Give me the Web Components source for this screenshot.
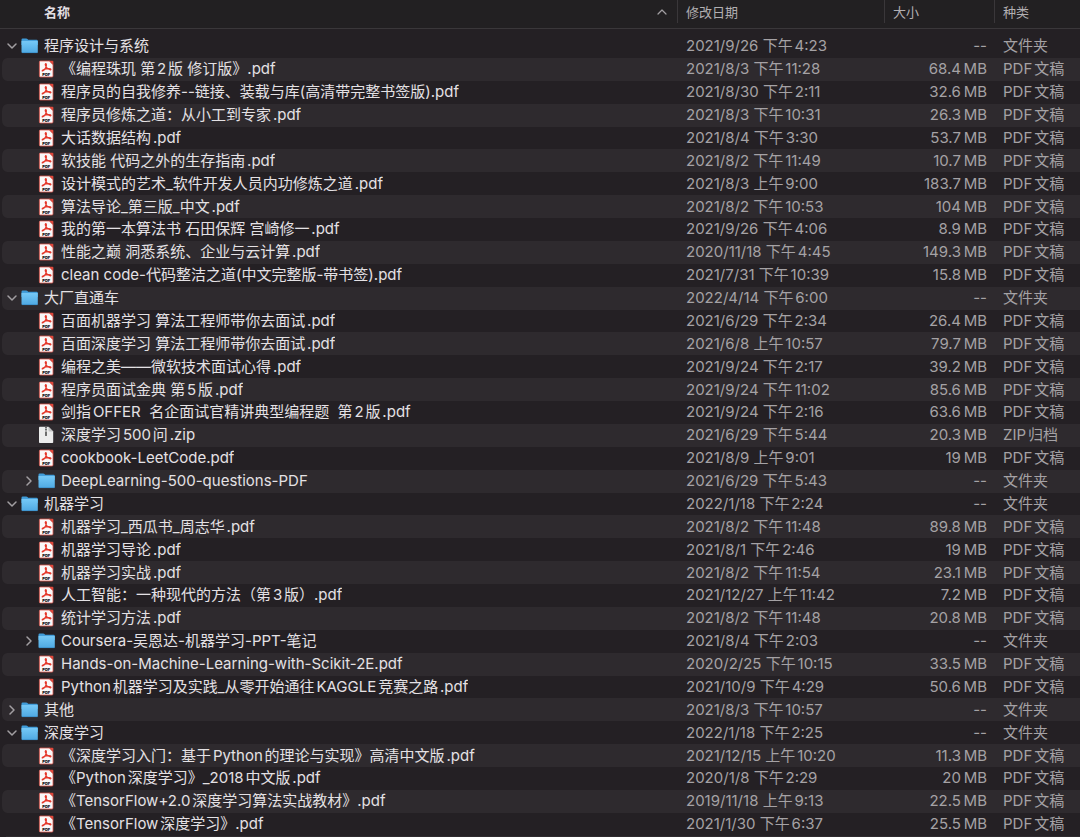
<!DOCTYPE html>
<html lang="zh-CN">
<head>
<meta charset="utf-8">
<meta name="viewport" content="width=device-width, initial-scale=1">
<title>程序设计与系统</title>
<style>
  html, body { margin: 0; background: #242024; }
  body {
    color-scheme: dark;
    font-family: Inter, "Noto Sans CJK SC", sans-serif;
    text-autospace: normal;
    text-spacing-trim: space-all;
    overflow: hidden;
  }
</style>
</head>
<body>
<file-browser></file-browser>

<script>
const ICONS = {
  folder: `
    <svg viewBox="0 0 18 18" aria-hidden="true">
      <defs>
        <linearGradient id="f" x1="0" y1="0" x2="0" y2="1">
          <stop offset="0" stop-color="#74c8f6"/><stop offset="1" stop-color="#4fa9e2"/>
        </linearGradient>
      </defs>
      <path d="M.5 2.7Q.5 1.5 1.7 1.5H5.3Q6 1.5 6.5 2L7.1 2.7H15.6Q16.8 2.7 16.8 3.9V8H.5Z" fill="#3f9bd8"/>
      <path d="M.5 4.4H16.8V15Q16.8 16 15.8 16H1.5Q.5 16 .5 15Z" fill="url(#f)"/>
      <path d="M.5 4.4H16.8" stroke="#8fd6fb" stroke-width=".6"/>
      <path d="M1 15.6H16.4" stroke="#3b8ec8" stroke-width=".8"/>
    </svg>`,
  pdf: `
    <svg viewBox="0 0 18 18" aria-hidden="true">
      <path d="M2.4 1H11.4L15 4.6V16Q15 17 14 17H2.4Q1.4 17 1.4 16V2Q1.4 1 2.4 1Z" fill="#faf8f8" stroke="#d9564c" stroke-width=".8"/>
      <path d="M11 .7H14.4Q15.4 .7 15.4 1.7V5Z" fill="#e0483b"/>
      <path d="M4.9 10.7C7.1 9.4 8.6 6.9 8.3 4.3C8.1 3 6.9 3.8 7.4 5.1C8.1 7.4 9.7 9.1 12 9.7C13.3 10 13.2 8.6 11.6 8.6C9.1 8.5 6.8 9 4.9 10C3.8 10.6 4.2 11.2 4.9 10.7Z" fill="none" stroke="#e5382b" stroke-width="1.3"/>
      <text x="8.2" y="15.6" text-anchor="middle" font-family="Inter, sans-serif" font-size="4" font-weight="900" fill="#242124">PDF</text>
    </svg>`,
  zip: `
    <svg viewBox="0 0 18 18" aria-hidden="true">
      <path d="M2 .8H10.5L15.2 5.5V16.2Q15.2 17 14.4 17H1.8Q1 17 1 16.2V1.6Q1 .8 1.8 .8Z" fill="#ececec"/>
      <path d="M10.5 .8V4.6Q10.5 5.5 11.4 5.5H15.2Z" fill="#c3c3c3"/>
      <path d="M8 1V7" stroke="#6d6d6d" stroke-width="2" stroke-dasharray="1.2 .5"/>
      <rect x="7" y="6.4" width="2" height="3.6" rx=".6" fill="#6d6d6d"/>
    </svg>`
};

// [depth, kind, name, modified, size, open]
const FILES = [
  [0, 'folder', '程序设计与系统', '2021/9/26 下午4:23', '--', true],
  [1, 'pdf', '《编程珠玑 第2版 修订版》.pdf', '2021/8/3 下午11:28', '68.4 MB'],
  [1, 'pdf', '程序员的自我修养--链接、装载与库(高清带完整书签版).pdf', '2021/8/30 下午2:11', '32.6 MB'],
  [1, 'pdf', '程序员修炼之道：从小工到专家.pdf', '2021/8/3 下午10:31', '26.3 MB'],
  [1, 'pdf', '大话数据结构.pdf', '2021/8/4 下午3:30', '53.7 MB'],
  [1, 'pdf', '软技能 代码之外的生存指南.pdf', '2021/8/2 下午11:49', '10.7 MB'],
  [1, 'pdf', '设计模式的艺术_软件开发人员内功修炼之道.pdf', '2021/8/3 上午9:00', '183.7 MB'],
  [1, 'pdf', '算法导论_第三版_中文.pdf', '2021/8/2 下午10:53', '104 MB'],
  [1, 'pdf', '我的第一本算法书 石田保辉 宫崎修一.pdf', '2021/9/26 下午4:06', '8.9 MB'],
  [1, 'pdf', '性能之巅 洞悉系统、企业与云计算.pdf', '2020/11/18 下午4:45', '149.3 MB'],
  [1, 'pdf', 'clean code-代码整洁之道(中文完整版-带书签).pdf', '2021/7/31 下午10:39', '15.8 MB'],
  [0, 'folder', '大厂直通车', '2022/4/14 下午6:00', '--', true],
  [1, 'pdf', '百面机器学习 算法工程师带你去面试.pdf', '2021/6/29 下午2:34', '26.4 MB'],
  [1, 'pdf', '百面深度学习 算法工程师带你去面试.pdf', '2021/6/8 上午10:57', '79.7 MB'],
  [1, 'pdf', '编程之美——微软技术面试心得.pdf', '2021/9/24 下午2:17', '39.2 MB'],
  [1, 'pdf', '程序员面试金典 第5版.pdf', '2021/9/24 下午11:02', '85.6 MB'],
  [1, 'pdf', '剑指OFFER  名企面试官精讲典型编程题  第2版.pdf', '2021/9/24 下午2:16', '63.6 MB'],
  [1, 'zip', '深度学习500问.zip', '2021/6/29 下午5:44', '20.3 MB'],
  [1, 'pdf', 'cookbook-LeetCode.pdf', '2021/8/9 上午9:01', '19 MB'],
  [1, 'folder', 'DeepLearning-500-questions-PDF', '2021/6/29 下午5:43', '--', false],
  [0, 'folder', '机器学习', '2022/1/18 下午2:24', '--', true],
  [1, 'pdf', '机器学习_西瓜书_周志华.pdf', '2021/8/2 下午11:48', '89.8 MB'],
  [1, 'pdf', '机器学习导论.pdf', '2021/8/1 下午2:46', '19 MB'],
  [1, 'pdf', '机器学习实战.pdf', '2021/8/2 下午11:54', '23.1 MB'],
  [1, 'pdf', '人工智能：一种现代的方法（第3版）.pdf', '2021/12/27 上午11:42', '7.2 MB'],
  [1, 'pdf', '统计学习方法.pdf', '2021/8/2 下午11:48', '20.8 MB'],
  [1, 'folder', 'Coursera-吴恩达-机器学习-PPT-笔记', '2021/8/4 下午2:03', '--', false],
  [1, 'pdf', 'Hands-on-Machine-Learning-with-Scikit-2E.pdf', '2020/2/25 下午10:15', '33.5 MB'],
  [1, 'pdf', 'Python机器学习及实践_从零开始通往KAGGLE竞赛之路.pdf', '2021/10/9 下午4:29', '50.6 MB'],
  [0, 'folder', '其他', '2021/8/3 下午10:57', '--', false],
  [0, 'folder', '深度学习', '2022/1/18 下午2:25', '--', true],
  [1, 'pdf', '《深度学习入门：基于Python的理论与实现》高清中文版.pdf', '2021/12/15 上午10:20', '11.3 MB'],
  [1, 'pdf', '《Python深度学习》_2018中文版.pdf', '2020/1/8 下午2:29', '20 MB'],
  [1, 'pdf', '《TensorFlow+2.0深度学习算法实战教材》.pdf', '2019/11/18 上午9:13', '22.5 MB'],
  [1, 'pdf', '《TensorFlow深度学习》.pdf', '2021/1/30 下午6:37', '25.5 MB']
];

const KINDS = { folder: '文件夹', pdf: 'PDF文稿', zip: 'ZIP归档' };

class FileIcon extends HTMLElement {
  connectedCallback() {
    this.attachShadow({ mode: 'open' });
    this.shadowRoot.innerHTML = `
      <style>
        :host { display: block; width: 18px; height: 18px; flex: none; }
        svg { display: block; width: 100%; height: 100%; }
      </style>
      ${ICONS[this.getAttribute('kind')]}
    `;
  }
}
customElements.define('file-icon', FileIcon);

class FolderToggle extends HTMLElement {
  connectedCallback() {
    this.attachShadow({ mode: 'open' });
    this.shadowRoot.innerHTML = `
      <style>
        :host { display: block; width: 12px; height: 12px; flex: none; }
        button { display: block; width: 100%; height: 100%; padding: 0; border: 0; background: none; color: #a29fa2; }
        svg { display: block; }
        button[aria-expanded="true"] svg { transform: rotate(90deg); }
      </style>
      <button type="button" aria-label="展开" aria-expanded="${this.hasAttribute('open')}">
        <svg width="12" height="12" viewBox="0 0 12 12" fill="none" stroke="currentColor" stroke-width="1.5" stroke-linecap="round" stroke-linejoin="round" aria-hidden="true">
          <path d="M4 2L8 6L4 10"/>
        </svg>
      </button>
    `;
    const button = this.shadowRoot.querySelector('button');
    button.addEventListener('click', () => {
      const open = this.toggleAttribute('open');
      button.setAttribute('aria-expanded', open);
    });
  }
}
customElements.define('folder-toggle', FolderToggle);

class FileName extends HTMLElement {
  connectedCallback() {
    const kind = this.getAttribute('kind');
    const open = this.hasAttribute('open') ? 'open' : '';
    this.attachShadow({ mode: 'open' });
    this.shadowRoot.innerHTML = `
      <style>
        :host { display: flex; align-items: center; padding-left: 4px; }
        :host([depth="1"]) { padding-left: 21px; }
        .arrow { width: 12px; margin-right: 3px; flex: none; }
        .label { margin-left: 5px; white-space: pre; overflow: hidden; text-overflow: ellipsis; }
      </style>
      <div class="arrow">${kind === 'folder' ? `<folder-toggle ${open}></folder-toggle>` : ''}</div>
      <file-icon kind="${kind}"></file-icon>
      <span class="label"><slot></slot></span>
    `;
  }
}
customElements.define('file-name', FileName);

class FileBrowser extends HTMLElement {
  connectedCallback() {
    const rows = FILES.map(([depth, kind, name, modified, size, open]) => `
      <tr>
        <td><file-name depth="${depth}" kind="${kind}" ${open ? 'open' : ''}>${name}</file-name></td>
        <td>${modified}</td>
        <td class="size">${size.replace(' ', '&thinsp;')}</td>
        <td>${KINDS[kind]}</td>
      </tr>`).join('');

    this.attachShadow({ mode: 'open' });
    this.shadowRoot.innerHTML = `
      <style>
        :host { display: block; height: 100vh; overflow: hidden; background: linear-gradient(#222022 28px, #3a373a 28px, #3a373a 29px, #242024 29px); }
        table { width: 100%; height: calc(100% - 1px); table-layout: fixed; border-collapse: separate; border-spacing: 0; }
        .date-col { width: 207px; }
        .size-col { width: 110px; }
        .kind-col { width: 86px; }
        th { height: 35px; padding: 0; vertical-align: top; text-align: left; font-weight: 400; }
        .head { display: flex; align-items: center; justify-content: space-between; box-sizing: border-box; width: 100%; height: 23px; padding: 0 10px 0 8px; border: 0; border-left: 1px solid #3a373a; background: none; color: #b2afb2; font: inherit; font-size: 13px; line-height: 20px; }
        .sorted { padding-left: 43px; border-left-color: transparent; color: #e2dfe2; font-weight: 600; }
        td { padding: 0 0 0 9px; color: #a5a2a5; font-size: 15px; line-height: 22px; white-space: nowrap; }
        td:first-child { padding-left: 0; border-left: 2px solid transparent; background-clip: padding-box; border-radius: 7px 0 0 7px; color: #e4e1e4; }
        td.size { padding: 0 7px 0 0; text-align: right; }
        tbody tr:nth-child(even) td { background-color: #2e2a2e; }
        .rest { height: 1px; margin-left: 6px; background: #2e2a2e; }
      </style>
      <table>
        <colgroup><col><col class="date-col"><col class="size-col"><col class="kind-col"></colgroup>
        <thead>
          <tr>
            <th scope="col" aria-sort="ascending">
              <button class="head sorted" type="button">名称
                <svg width="10" height="10" viewBox="0 0 10 10" fill="none" stroke="#a29fa2" stroke-width="1.2" stroke-linecap="round" stroke-linejoin="round" aria-hidden="true"><path d="M1 7L5 3L9 7"/></svg>
              </button>
            </th>
            <th scope="col"><button class="head" type="button">修改日期</button></th>
            <th scope="col"><button class="head" type="button">大小</button></th>
            <th scope="col"><button class="head" type="button">种类</button></th>
          </tr>
        </thead>
        <tbody>${rows}</tbody>
      </table>
      <div class="rest"></div>
    `;
  }
}
customElements.define('file-browser', FileBrowser);
</script>
</body>
</html>
